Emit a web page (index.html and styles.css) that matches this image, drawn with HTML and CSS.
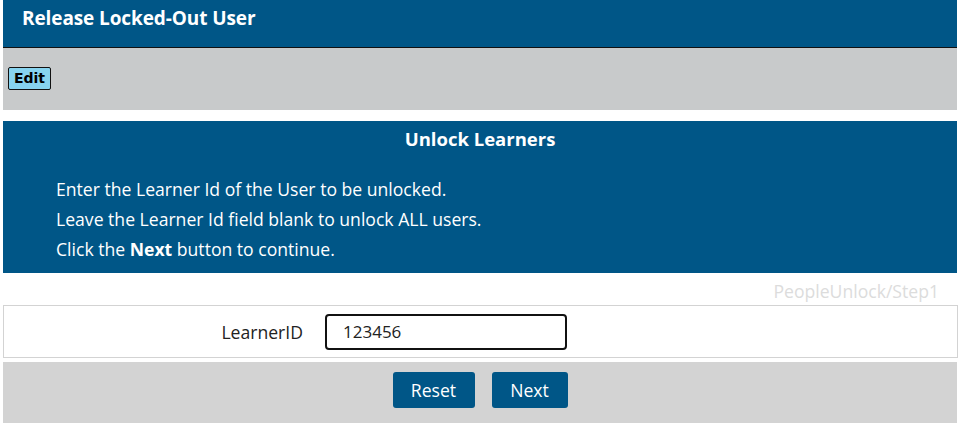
FILE: index.html
```html
<!DOCTYPE html>
<html>
<head>
<meta charset="utf-8">
<link rel="stylesheet" href="styles.css">
</head>
<body>
<div class="page">
  <div class="title-bar">Release Locked-Out User</div>
  <div class="toolbar"><button class="edit-btn">Edit</button></div>
  <div class="panel">
    <h2 class="panel-title">Unlock Learners</h2>
    <div class="panel-text">
      <p>Enter the Learner Id of the User to be unlocked.</p>
      <p>Leave the Learner Id field blank to unlock ALL users.</p>
      <p>Click the <b>Next</b> button to continue.</p>
    </div>
  </div>
  <div class="step">PeopleUnlock/Step1</div>
  <div class="form-box">
    <label class="field-label">LearnerID</label>
    <input class="field-input" type="text" value="123456">
  </div>
  <div class="actions">
    <button class="btn">Reset</button>
    <button class="btn btn-next">Next</button>
  </div>
</div>
</body>
</html>
```

FILE: styles.css
```css
html, body {
  margin: 0;
  padding: 0;
  background: #fff;
  font-family: "Open Sans", "Noto Sans", sans-serif;
}
.page {
  padding: 0 2px 0 3px;
}
.title-bar {
  background: #005687;
  color: #fff;
  font-weight: 700;
  font-size: 19px;
  box-sizing: border-box;
  padding: 5px 0 0 19px;
  letter-spacing: -0.1px;
  border-bottom: 1px solid #111;
  height: 48px;
}
.toolbar {
  background: #c8cacb;
  height: 62px;
  box-sizing: border-box;
  padding: 18px 0 0 5px;
}
.edit-btn {
  background: #87d3ef;
  border: 1px solid #111;
  border-radius: 2px;
  font-family: "DejaVu Sans", Verdana, sans-serif;
  font-weight: 700;
  font-size: 14px;
  height: 23px;
  width: 43px;
  padding: 0;
  color: #000;
}
.panel {
  margin-top: 11px;
  background: #005687;
  color: #fff;
  height: 152px;
  box-sizing: border-box;
  padding-top: 6px;
}
.panel-title {
  margin: 0;
  text-align: center;
  font-size: 18.5px;
  font-weight: 700;
  line-height: 24px;
}
.panel-text {
  padding: 23px 0 0 53px;
  font-size: 17.6px;
}
.panel-text p {
  margin: 0;
  line-height: 30px;
}
.step {
  text-align: right;
  color: #dcdcdc;
  font-size: 17.6px;
  line-height: 20px;
  padding: 8px 18px 4px 0;
}
.form-box {
  border: 1px solid #d3d3d3;
  height: 53px;
  box-sizing: border-box;
  display: flex;
  align-items: center;
  margin-right: -1px;
}
.field-label {
  width: 299px;
  text-align: right;
  font-size: 17.6px;
  color: #222;
}
.field-input {
  margin-left: 22px;
  width: 242px;
  height: 36px;
  box-sizing: border-box;
  border: 2px solid #111;
  border-radius: 4px;
  font-family: "Open Sans", sans-serif;
  font-size: 17px;
  padding: 0 0 0 16px;
  color: #222;
}
.actions {
  margin-top: 4px;
  background: #d3d3d3;
  height: 61px;
  display: flex;
  justify-content: center;
  gap: 17px;
  padding-top: 10px;
  box-sizing: border-box;
}
.btn {
  background: #005687;
  color: #fff;
  border: none;
  border-radius: 3px;
  font-family: "Open Sans", sans-serif;
  font-size: 17.6px;
  height: 36px;
  width: 82px;
  padding: 0;
}
.btn-next {
  width: 76px;
}
```
